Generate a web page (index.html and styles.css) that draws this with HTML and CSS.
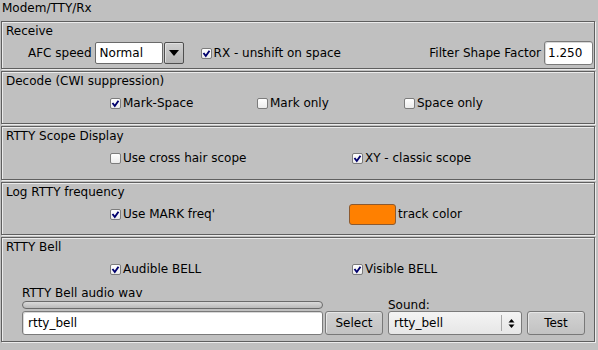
FILE: index.html
```html
<!DOCTYPE html>
<html lang="en">

<head>
  <meta charset="utf-8">
  <link rel="stylesheet" href="styles.css">
</head>

<body>
  <div class="tab-title">Modem/TTY/Rx</div>

  <!-- Receive -->
  <div class="group group-receive">
    <div class="group-label">Receive</div>
    <div class="row row-receive">
      <span class="field-label">AFC speed</span>
      <div class="choice-afc">
        <span class="choice-value">Normal</span>
        <span class="choice-btn"><i class="tri"></i></span>
      </div>
      <label class="check check-rx">
        <span class="box"><svg width="9" height="9" viewBox="0 0 9 9"><polyline points="1.5,4 3.8,7 7.5,1.8" /></svg></span>RX - unshift on space
      </label>
      <span class="field-label push">Filter Shape Factor</span>
      <span class="input input-num">1.250</span>
    </div>
  </div>

  <!-- Decode -->
  <div class="group group-decode">
    <div class="group-label">Decode (CWI suppression)</div>
    <div class="row row-checks">
      <label class="check w147">
        <span class="box"><svg width="9" height="9" viewBox="0 0 9 9"><polyline points="1.5,4 3.8,7 7.5,1.8" /></svg></span>Mark-Space
      </label>
      <label class="check w147"><span class="box"></span>Mark only</label>
      <label class="check w147"><span class="box"></span>Space only</label>
    </div>
  </div>

  <!-- Scope -->
  <div class="group group-scope">
    <div class="group-label">RTTY Scope Display</div>
    <div class="row row-checks">
      <label class="check w242"><span class="box"></span>Use cross hair scope</label>
      <label class="check w242">
        <span class="box"><svg width="9" height="9" viewBox="0 0 9 9"><polyline points="1.5,4 3.8,7 7.5,1.8" /></svg></span>XY - classic scope
      </label>
    </div>
  </div>

  <!-- Log -->
  <div class="group group-log">
    <div class="group-label">Log RTTY frequency</div>
    <div class="row row-checks">
      <label class="check w239">
        <span class="box"><svg width="9" height="9" viewBox="0 0 9 9"><polyline points="1.5,4 3.8,7 7.5,1.8" /></svg></span>Use MARK freq'
      </label>
      <span class="color-btn"></span>
      <span class="color-label">track color</span>
    </div>
  </div>

  <!-- Bell -->
  <div class="group group-bell">
    <div class="group-label">RTTY Bell</div>
    <div class="row row-checks">
      <label class="check w242">
        <span class="box"><svg width="9" height="9" viewBox="0 0 9 9"><polyline points="1.5,4 3.8,7 7.5,1.8" /></svg></span>Audible BELL
      </label>
      <label class="check w242">
        <span class="box"><svg width="9" height="9" viewBox="0 0 9 9"><polyline points="1.5,4 3.8,7 7.5,1.8" /></svg></span>Visible BELL
      </label>
    </div>
    <div class="bell-files">
      <div class="col-wav">
        <div class="small-label">RTTY Bell audio wav</div>
        <div class="progress"></div>
        <span class="input input-wav">rtty_bell</span>
      </div>
      <span class="button btn-select">Select</span>
      <div class="col-sound">
        <div class="small-label">Sound:</div>
        <div class="choice-sound">
          <span class="choice-value">rtty_bell</span>
          <span class="spin">
            <svg width="7" height="11" viewBox="0 0 7 11"><polygon points="3.5,1 6.5,4.5 0.5,4.5" /><polygon points="0.5,6.5 6.5,6.5 3.5,10" /></svg>
          </span>
        </div>
      </div>
      <span class="button btn-test">Test</span>
    </div>
  </div>
</body>

</html>
```

FILE: styles.css
```css
* {
  -webkit-box-sizing: border-box;
  box-sizing: border-box;
}

body {
  margin: 0;
  width: 598px;
  height: 350px;
  overflow: hidden;
  background: #c0c0c0;
  color: #000;
  font: 12px/14px "DejaVu Sans", "Liberation Sans", sans-serif;
}

label {
  font: inherit;
}

.tab-title {
  height: 21px;
  padding: 1px 0 0 2px;
}
/* engraved groups */

.group {
  margin: 2px 0 0 1px;
  width: 594px;
  padding-top: 2px;
  border: 1px solid #5f5f5f;
  box-shadow: inset 1px 1px 0 #ececec, 1px 1px 0 #ececec;
}

.group-receive {
  margin-top: 0;
  height: 48px;
}

.group-decode {
  height: 53px;
}

.group-scope {
  height: 54px;
}

.group-log {
  height: 53px;
}

.group-bell {
  height: 105px;
}

.group-label {
  padding-left: 4px;
}

.row {
  display: flex;
  align-items: center;
  height: 20px;
  margin-top: 5px;
}

.row-checks {
  padding-left: 108px;
}
/* check buttons */

.check {
  display: flex;
  align-items: center;
  white-space: nowrap;
}

.box {
  display: flex;
  align-items: center;
  justify-content: center;
  width: 11px;
  height: 11px;
  margin-right: 2px;
  border: 1px solid #7c7c7c;
  border-radius: 2px;
  background: linear-gradient(#fff, #ececec);
}

.box polyline {
  fill: none;
  stroke: #00006e;
  stroke-width: 1.9;
}

.w147 {
  width: 147px;
}

.w239 {
  width: 239px;
}

.w242 {
  width: 242px;
}
/* receive row */

.row-receive {
  height: 24px;
  margin-top: 3px;
  padding: 0 1px 0 26px;
}

.field-label {
  white-space: nowrap;
  margin-right: 3px;
}

.push {
  margin-left: auto;
}

.choice-afc {
  display: flex;
  height: 22px;
  margin-right: 17px;
}

.choice-afc .choice-value {
  width: 68px;
  padding: 3px 0 0 4px;
  background: #fff;
  border: 1px solid #6a6a6a;
  border-radius: 2px;
}

.choice-btn {
  display: flex;
  align-items: center;
  justify-content: center;
  width: 20px;
  margin-left: 1px;
  border: 1px solid #4f4f4f;
  border-radius: 2px;
  background: linear-gradient(#cfcfcf, #b4b4b4);
  box-shadow: inset 1px 1px 0 #e0e0e0;
}

.tri {
  width: 0;
  height: 0;
  border-left: 5px solid transparent;
  border-right: 5px solid transparent;
  border-top: 6px solid #000;
}

.check-rx {
  margin-right: 10px;
}

.input {
  display: block;
  background: #fff;
  border: 1px solid #7a7a7a;
  border-radius: 3px;
  box-shadow: inset 1px 1px 0 #d8d8d8;
  white-space: nowrap;
}

.input-num {
  width: 49px;
  height: 24px;
  padding: 4px 0 0 3px;
}
/* log row */

.color-btn {
  width: 47px;
  height: 21px;
  margin-right: 2px;
  background: #ff8000;
  border: 1px solid #8c5a30;
  border-radius: 3px;
}
/* bell files */

.bell-files {
  display: flex;
  align-items: flex-end;
  margin-top: 7px;
  padding-left: 20px;
}

.col-wav {
  width: 301px;
}

.small-label {
  height: 14px;
}

.progress {
  height: 8px;
  margin-top: 1px;
  border: 1px solid #6a6a6a;
  border-radius: 4px;
  background: linear-gradient(#dadada, #b9b9b9);
}

.input-wav {
  height: 24px;
  margin-top: 2px;
  padding: 4px 0 0 5px;
}

.button {
  display: flex;
  align-items: center;
  justify-content: center;
  width: 58px;
  height: 24px;
  border: 1px solid #787878;
  border-radius: 3px;
  background: linear-gradient(#d2d2d2, #c2c2c2);
  box-shadow: inset 1px 1px 0 #e6e6e6;
}

.btn-select {
  margin-left: 2px;
}

.col-sound {
  width: 134px;
  margin-left: 5px;
}

.col-sound .small-label {
  height: 13px;
}

.choice-sound {
  display: flex;
  height: 24px;
  border: 1px solid #7a7a7a;
  border-radius: 3px;
  background: linear-gradient(#f4f4f4, #e6e6e6);
}

.choice-sound .choice-value {
  flex: 1;
  padding: 4px 0 0 5px;
}

.spin {
  display: flex;
  align-items: center;
  justify-content: center;
  width: 20px;
  margin: 3px 0;
  border-left: 1px solid #a8a8a8;
}

.spin polygon {
  fill: #000;
}

.btn-test {
  margin-left: 5px;
}
```
